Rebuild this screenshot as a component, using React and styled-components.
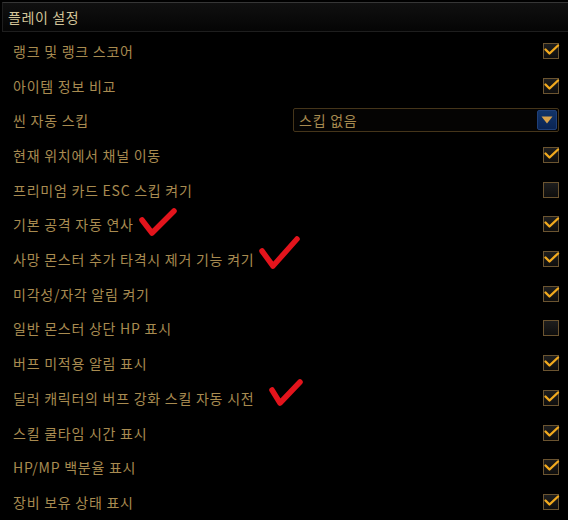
import React from 'react';
import styled, { createGlobalStyle } from 'styled-components';

/* Play settings panel – dark game UI */

// red hand-drawn ticks, points in row coordinates
const TICK_1 = 'M140 13 L150 26 L172 4';
const TICK_2 = 'M260 9 L271 24 L295 -3';
const TICK_3 = 'M270 10 L278 23 L298 2';

const ROWS = [
  { label: '랭크 및 랭크 스코어', checked: true },
  { label: '아이템 정보 비교', checked: true },
  { label: '씬 자동 스킵', select: '스킵 없음' },
  { label: '현재 위치에서 채널 이동', checked: true },
  { label: '프리미엄 카드 ESC 스킵 켜기', checked: false },
  { label: '기본 공격 자동 연사', checked: true, tick: TICK_1 },
  { label: '사망 몬스터 추가 타격시 제거 기능 켜기', checked: true, tick: TICK_2 },
  { label: '미각성/자각 알림 켜기', checked: true },
  { label: '일반 몬스터 상단 HP 표시', checked: false },
  { label: '버프 미적용 알림 표시', checked: true },
  { label: '딜러 캐릭터의 버프 강화 스킬 자동 시전', checked: true, tick: TICK_3 },
  { label: '스킬 쿨타임 시간 표시', checked: true },
  { label: 'HP/MP 백분율 표시', checked: true },
  { label: '장비 보유 상태 표시', checked: true },
];

const GlobalStyle = createGlobalStyle`
  html, body {
    margin: 0;
    background: #000;
  }
  body {
    font-family: "Noto Sans CJK KR", "Noto Sans", sans-serif;
  }
`;

const Panel = styled.div`
  width: 568px;
  height: 520px;
  padding: 2px 0 0 2px;
  box-sizing: border-box;
  background: #000;
  overflow: hidden;
`;

const Header = styled.div`
  height: 28px;
  display: flex;
  align-items: center;
  padding-left: 5px;
  border-top: 1px solid #363636;
  border-bottom: 1px solid #1e1e1e;
  border-left: 1px solid #1e1e1e;
  background: linear-gradient(#101010, #050505);
  color: #d2c498;
  font-size: 14px;
  letter-spacing: 0.6px;
`;

const List = styled.div`
  padding-top: 1.6px;
`;

const Row = styled.div`
  position: relative;
  height: 34.7px;
  display: flex;
  align-items: center;
  justify-content: space-between;
  padding: 0 9px 0 11px;
  color: #a88b50;
  font-size: 14px;
  letter-spacing: 0.75px;
`;

const Label = styled.span`
  white-space: nowrap;
`;

const Box = styled.span`
  position: relative;
  width: 14px;
  height: 14px;
  border: 1px solid #6b5430;
  background: linear-gradient(#1e1e1e, #0e0e0e);
  flex: none;

  svg {
    position: absolute;
    left: -1px;
    top: -2px;
    overflow: visible;
  }
`;

const Select = styled.div`
  box-sizing: border-box;
  width: 266px;
  height: 24px;
  display: flex;
  align-items: center;
  justify-content: space-between;
  padding: 0 1px 0 5px;
  border: 1px solid #45351a;
  border-radius: 2px;
  background: #050403;
  color: #a88b50;
`;

const SelectButton = styled.span`
  width: 18px;
  height: 18px;
  border: 1px solid #1f3f78;
  border-radius: 2px;
  background: linear-gradient(#123468, #0a2454);
  display: flex;
  align-items: center;
  justify-content: center;
`;

const Tick = styled.svg`
  position: absolute;
  left: 0;
  top: 0;
  overflow: visible;
  pointer-events: none;
`;

function Checkbox({ checked }) {
  return (
    <Box>
      {checked && (
        <svg width="16" height="16" viewBox="0 0 16 16">
          <path d="M2.5 7.5 L6.5 11.5 L15 3.5" fill="none" stroke="#f2aa1e" strokeWidth="2.4" strokeLinecap="round" strokeLinejoin="round" />
        </svg>
      )}
    </Box>
  );
}

export default function App() {
  return (
    <>
      <GlobalStyle />
      <Panel>
        <Header>플레이 설정</Header>
        <List>
          {ROWS.map((r) => (
            <Row key={r.label}>
              <Label>{r.label}</Label>
              {r.tick && (
                <Tick width="566" height="35">
                  <path d={r.tick} fill="none" stroke="#e3141c" strokeWidth="5.5" strokeLinecap="round" strokeLinejoin="round" />
                </Tick>
              )}
              {r.select ? (
                <Select>
                  <span>{r.select}</span>
                  <SelectButton>
                    <svg width="12" height="8" viewBox="0 0 12 8">
                      <path d="M0.5 0.5 H11.5 L6 7.5 Z" fill="#d9a24a" />
                    </svg>
                  </SelectButton>
                </Select>
              ) : (
                <Checkbox checked={r.checked} />
              )}
            </Row>
          ))}
        </List>
      </Panel>
    </>
  );
}
